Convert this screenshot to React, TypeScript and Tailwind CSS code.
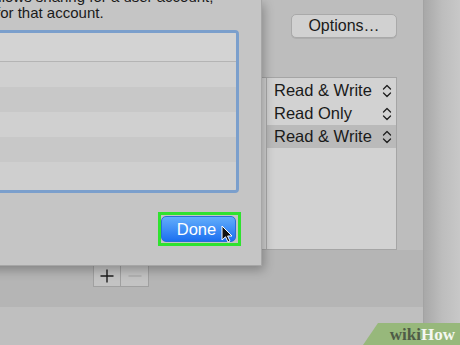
import React from "react";

const rows = [
    { label: "Read & Write", selected: false },
    { label: "Read Only", selected: false },
    { label: "Read & Write", selected: true },
];

function Chevrons() {
    return (
        <svg width="10" height="16" viewBox="0 0 10 16" fill="none" stroke="#1f1f1f" strokeWidth="1.3" strokeLinecap="round" strokeLinejoin="round">
            <path d="M1.5 6 L5 2.5 L8.5 6" />
            <path d="M1.5 10 L5 13.5 L8.5 10" />
        </svg>
    );
}

function Cursor() {
    return (
        <svg width="12" height="18" viewBox="0 0 12 18">
            <path d="M1 1 L1 15 L4.5 11.8 L7 17 L9 16 L6.6 11 L11 11 Z" fill="#111" stroke="#fff" strokeWidth="1" strokeLinejoin="round" />
        </svg>
    );
}

export default function App() {
    return (
        <div className="relative w-[460px] h-[345px] overflow-hidden flex font-['Liberation_Sans',Arial,sans-serif] text-[#1a1a1a]">
            {/* window behind the sheet */}
            <div className="w-[424px] flex flex-col border-r border-[#a3a3a3] bg-[#bdbdbd]">
                <div className="h-[250px] flex flex-col items-start">
                    <button className="ml-[291px] mt-[14px] w-[106px] h-[24px] rounded-[5px] bg-[#d1d1d1] border border-[#a9a9a9] shadow-[0_1px_0_rgba(0,0,0,0.08)] text-[16px] leading-none text-[#1a1a1a]">
                        Options…
                    </button>
                    <div className="mt-[39px] ml-[200px] w-[197px] h-[173px] flex border border-[#a5a5a5] bg-[#d2d2d2]">
                        <div className="w-[66px] border-r border-[#ababab]" />
                        <div className="flex-1 pt-px flex flex-col">
                            {rows.map((r, i) => (
                                <div
                                    key={i}
                                    className={`h-[23px] flex items-center justify-between pl-[7px] pr-[4px] ${r.selected ? "bg-[#bababa]" : ""}`}
                                >
                                    <span className="text-[16.5px] leading-none">{r.label}</span>
                                    <Chevrons />
                                </div>
                            ))}
                        </div>
                    </div>
                </div>
                <div className="h-[57px] bg-[#b5b5b5] pl-[93px] pt-[15px] flex items-start">
                    <div className="flex border border-[#a0a0a0] bg-[#c3c3c3] h-[22px]">
                        <div className="w-[27px] flex items-center justify-center border-r border-[#a0a0a0]">
                            <svg width="14" height="14" viewBox="0 0 14 14" stroke="#1c1c1c" strokeWidth="1.4">
                                <path d="M7 0.5 V13.5 M0.5 7 H13.5" />
                            </svg>
                        </div>
                        <div className="w-[27px] flex items-center justify-center">
                            <svg width="14" height="14" viewBox="0 0 14 14" stroke="#a9a9a9" strokeWidth="1.4">
                                <path d="M0.5 7 H13.5" />
                            </svg>
                        </div>
                    </div>
                </div>
                <div className="flex-1 bg-[#bfbfbf]" />
            </div>
            <div className="flex-1 bg-gradient-to-r from-[#a8a8a8] via-[#bdbdbd] to-[#c8c8c8]" />

            {/* sheet dialog */}
            <div className="absolute left-[-240px] top-0 w-[502px] h-[266px] bg-[#c5c5c5] border-r border-b border-[#a6a6a6] shadow-[2px_4px_10px_rgba(0,0,0,0.28)] pl-[236px] pr-[22px] flex flex-col">
                <div className="-mt-[11px] text-[15px] leading-[16px] whitespace-nowrap text-[#1a1a1a]">
                    <div className="-ml-[6px]">allows sharing for a user account,</div>
                    <div>for that account.</div>
                </div>
                <div className="mt-[9px] h-[163px] border-[3px] border-[#7b9fcc] rounded-[4px] flex flex-col overflow-hidden">
                    <div className="h-[29px] bg-[#d3d3d3] border-b border-[#b4b4b4]" />
                    <div className="h-[25px] bg-[#d0d0d0]" />
                    <div className="h-[25px] bg-[#c8c8c8]" />
                    <div className="h-[25px] bg-[#d0d0d0]" />
                    <div className="h-[25px] bg-[#c8c8c8]" />
                    <div className="flex-1 bg-[#cfcfcf]" />
                </div>
                <div className="mt-[19px] self-end mr-[-2px] border-[3px] border-[#2fe22f] pt-px pb-px pr-[2px]">
                    <div className="w-[75px] h-[26px] rounded-[5px] bg-gradient-to-b from-[#62adfb] to-[#1b6ff0] flex items-center justify-center border border-[#2a6fd6]">
                        <span className="text-white text-[16.5px] leading-none -ml-[4px]">Done</span>
                    </div>
                </div>
            </div>

            {/* pointer */}
            <div className="absolute left-[221px] top-[225px]">
                <Cursor />
            </div>

            {/* wikiHow badge */}
            <div className="absolute right-0 bottom-0 w-[97px] h-[22px] bg-[#97b87b] [clip-path:polygon(15px_0,100%_0,100%_100%,0_100%)] flex items-center justify-end pr-[5px]">
                <span className="font-['Liberation_Serif',serif] font-bold text-[17px] leading-none">
                    <span className="text-[#4f5c47]">wiki</span>
                    <span className="text-[#f4f7f1]">How</span>
                </span>
            </div>
        </div>
    );
}
